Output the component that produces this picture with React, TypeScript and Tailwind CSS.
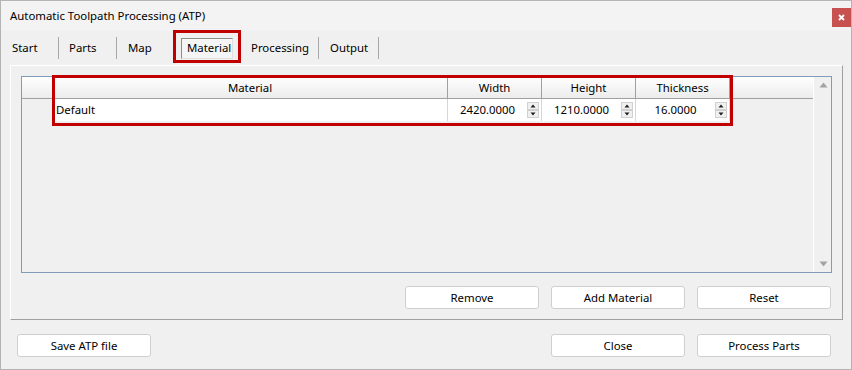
import React from "react";

const F = "font-['Noto_Sans',sans-serif]";

function Spinner() {
  return (
    <svg width="12" height="16" viewBox="0 0 12 16" className="shrink-0">
      <rect x="0.5" y="0.5" width="11" height="7" fill="#f0f0f0" stroke="#d0d0d0" />
      <rect x="0.5" y="8.5" width="11" height="7" fill="#f0f0f0" stroke="#d0d0d0" />
      <path d="M3.5 5.5 L6 2.5 L8.5 5.5 Z" fill="#202020" />
      <path d="M3.5 10.5 L6 13.5 L8.5 10.5 Z" fill="#202020" />
    </svg>
  );
}

function NumCell({ value }: { value: string }) {
  return (
    <div className="w-[94px] h-full flex items-center border-r border-[#d6d6d6] bg-white pr-[2px]">
      <div className="flex-1 text-center text-[11.4px] text-[#000]">{value}</div>
      <Spinner />
    </div>
  );
}

function Btn({ label }: { label: string }) {
  return (
    <div className="w-[134px] h-[23px] bg-white border border-[#cfcfcf] rounded-[3px] flex items-center justify-center text-[11.4px] text-[#000]">
      {label}
    </div>
  );
}

export default function App() {
  return (
    <div
      className={`${F} relative w-[852px] h-[370px] border border-[#b4b4b4] bg-[#f0f0f0] overflow-hidden flex flex-col text-[#000]`}
    >
      {/* Title bar */}
      <div className="h-[30px] bg-[#f3f3f3] flex items-start justify-between shrink-0">
        <div className="pl-[9px] pt-[6px] text-[11.4px] leading-[18px]">Automatic Toolpath Processing (ATP)</div>
        <div className="mt-[7px] w-[19px] h-[19px] bg-[#c75050] flex items-center justify-center">
          <svg width="7" height="7" viewBox="0 0 7 7">
            <path d="M1 1 L6 6 M6 1 L1 6" stroke="#ffffff" strokeWidth="1.8" />
          </svg>
        </div>
      </div>

      {/* Tabs */}
      <div className="h-[34px] flex items-center pl-[11px] text-[11.4px] shrink-0">
        <div className="w-[46px]">Start</div>
        <div className="w-px h-[22px] bg-[#a8a8a8]" />
        <div className="w-[57px] pl-[10px]">Parts</div>
        <div className="w-px h-[22px] bg-[#a8a8a8]" />
        <div className="w-[64px] pl-[11px]">Map</div>
        <div className="w-[52px] h-[21px] flex items-center pl-[5px] border-t border-l border-[#8c8c8c] border-b border-r border-b-[#e0e0e0] border-r-[#e0e0e0] bg-[#f5f5f5]">
          Material
        </div>
        <div className="w-[85px] pl-[18px]">Processing</div>
        <div className="w-px h-[22px] bg-[#a8a8a8]" />
        <div className="w-[59px] pl-[11px]">Output</div>
        <div className="w-px h-[22px] bg-[#a8a8a8]" />
      </div>

      {/* Panel */}
      <div className="ml-[9px] w-[833px] h-[255px] border-t border-l border-white border-r border-b border-r-[#a0a0a0] border-b-[#a0a0a0] pl-[10px] pt-[10px] pr-[10px] flex flex-col shrink-0">
        {/* Table */}
        <div className="w-[811px] h-[197px] border border-[#7f9db9] flex">
          <div className="w-[791px] flex flex-col">
            {/* Header */}
            <div className="h-[22px] flex border-b border-[#a0a0a0] bg-linear-to-b from-white to-[#ececec] text-[11.4px]">
              <div className="w-[31px] border-r border-[#a0a0a0]" />
              <div className="w-[395px] border-r border-[#a0a0a0] flex items-center justify-center">Material</div>
              <div className="w-[94px] border-r border-[#a0a0a0] flex items-center justify-center">Width</div>
              <div className="w-[94px] border-r border-[#a0a0a0] flex items-center justify-center">Height</div>
              <div className="w-[94px] border-r border-[#a0a0a0] flex items-center justify-center">Thickness</div>
            </div>
            {/* Row */}
            <div className="h-[22px] flex text-[11.4px]">
              <div className="w-[31px] border-r border-[#a0a0a0]" />
              <div className="w-[395px] border-r border-[#d6d6d6] bg-white flex items-center pl-[3px]">Default</div>
              <NumCell value="2420.0000" />
              <NumCell value="1210.0000" />
              <NumCell value="16.0000" />
            </div>
          </div>
          {/* Scrollbar */}
          <div className="w-[18px] border-l border-white flex flex-col items-center justify-between pt-[5px] pb-[5px]">
            <svg width="9" height="6" viewBox="0 0 9 6" className="ml-[1px]">
              <path d="M0.5 5.5 L4.5 0.5 L8.5 5.5 Z" fill="#a3a3a3" />
            </svg>
            <svg width="9" height="6" viewBox="0 0 9 6" className="ml-[1px]">
              <path d="M0.5 0.5 L4.5 5.5 L8.5 0.5 Z" fill="#a3a3a3" />
            </svg>
          </div>
        </div>
        {/* Panel buttons */}
        <div className="mt-[13px] flex justify-end gap-[12px] pr-[1px]">
          <Btn label="Remove" />
          <Btn label="Add Material" />
          <Btn label="Reset" />
        </div>
      </div>

      {/* Bottom buttons */}
      <div className="mt-[14px] flex pl-[16px] pr-[20px]">
        <Btn label="Save ATP file" />
        <div className="flex-1" />
        <div className="flex gap-[12px]">
          <Btn label="Close" />
          <Btn label="Process Parts" />
        </div>
      </div>

      {/* Annotation highlights */}
      <div className="absolute left-[172px] top-[29px] w-[68px] h-[33px] border-[3px] border-[#c00000] pointer-events-none" />
      <div className="absolute left-[51px] top-[74px] w-[681px] h-[51px] border-[3px] border-[#c00000] pointer-events-none" />
    </div>
  );
}
